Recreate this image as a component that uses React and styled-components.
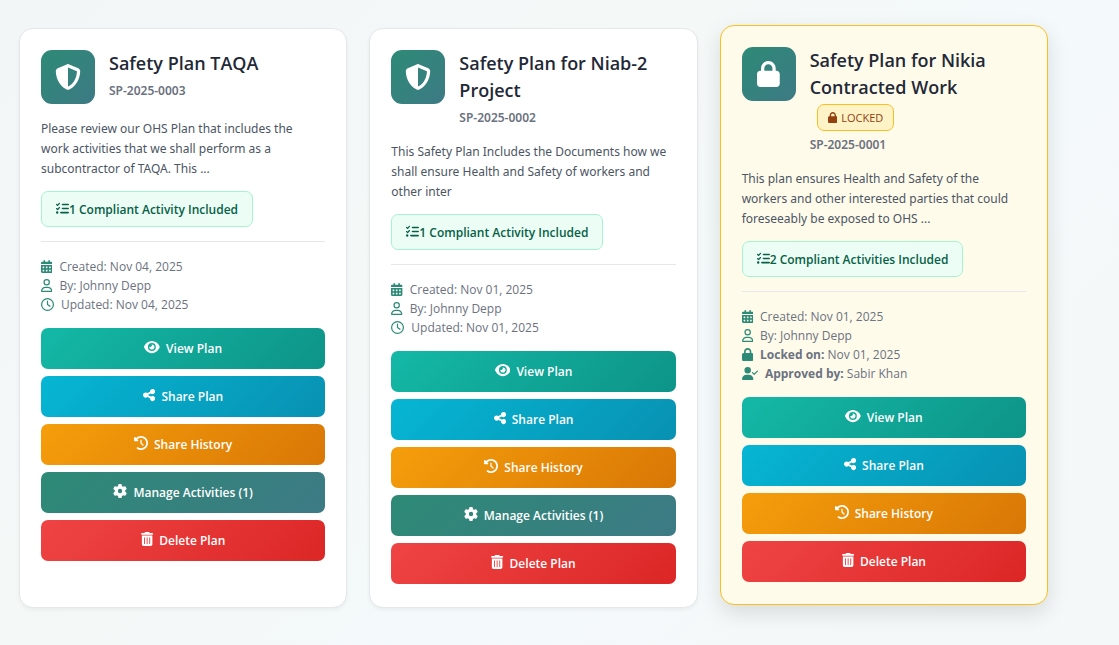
import React from "react";
import styled, { createGlobalStyle, css } from "styled-components";
import {
  FaShieldHalved, FaLock, FaListCheck, FaCalendarDays, FaRegUser, FaRegClock,
  FaUserCheck, FaEye, FaShareNodes, FaClockRotateLeft, FaGear, FaTrashCan,
} from "react-icons/fa6";

const GlobalStyle = createGlobalStyle`
  *, *::before, *::after { box-sizing: border-box; }
  body {
    margin: 0;
    min-height: 100vh;
    font-family: "Open Sans", "Noto Sans", sans-serif;
    color: #1f2937;
    background: linear-gradient(135deg, #f2f6f7 0%, #f4f8f7 40%, #f4f9fb 60%, #f5f8f8 100%);
  }
  p, h2, ul { margin: 0; padding: 0; }

  /* Font Awesome glyphs keep the proportions of their own view box. */
  svg { flex: none; width: auto; }
  svg[viewBox="0 0 448 512"] { aspect-ratio: 448 / 512; }
  svg[viewBox="0 0 512 512"] { aspect-ratio: 1; }
  svg[viewBox="0 0 576 512"] { aspect-ratio: 576 / 512; }
  svg[viewBox="0 0 640 512"] { aspect-ratio: 640 / 512; }
`;

const Page = styled.main`
  display: grid;
  grid-template-columns: repeat(3, minmax(0, 1fr));
  gap: 22px;
  padding: 28px 71px 37px 19px;
`;

const Card = styled.article`
  padding: 21px 21px 22px;
  border: 1px solid #e5e7eb;
  border-radius: 14px;
  background: #fff;
  box-shadow: 0 2px 4px rgba(0, 0, 0, 0.05);
  ${({ $locked }) => $locked && css`
    border-color: #fbbf24;
    background: #fffbeb;
    box-shadow: 0 8px 22px rgba(0, 0, 0, 0.12);
    transform: translateY(-3px);
  `}
`;

const Header = styled.header`
  display: flex;
  align-items: flex-start;
  gap: 14px;
  margin-bottom: 15px;
`;

const IconTile = styled.div`
  display: flex;
  flex: none;
  align-items: center;
  justify-content: center;
  width: 54px;
  height: 54px;
  border-radius: 11px;
  color: #fff;
  background: linear-gradient(135deg, #2d8a76, #3d7a85);
  svg { height: 26px; }
`;

const Heading = styled.div`
  flex: 1;
  min-width: 0;
`;

const Title = styled.h2`
  font-size: 18px;
  font-weight: 600;
  line-height: 27px;
`;

const LockedTag = styled.span`
  display: flex;
  align-items: center;
  gap: 4px;
  width: max-content;
  height: 27px;
  margin: 3px 0 0 7px;
  padding: 0 10px;
  border: 1px solid #fbbf24;
  border-radius: 7px;
  font-size: 11px;
  font-weight: 500;
  color: #92400e;
  background: #fef3c7;
  svg { height: 11px; }
`;

const Code = styled.p`
  margin-top: 5px;
  font-family: "Noto Sans", sans-serif;
  font-size: 12px;
  font-weight: 600;
  line-height: 18px;
  color: #6b7280;
`;

const Description = styled.p`
  padding-right: 4px;
  font-family: "Noto Sans", sans-serif;
  font-size: 12px;
  line-height: 20px;
  color: #4b5563;
`;

const Compliance = styled.div`
  display: flex;
  align-items: center;
  width: max-content;
  height: 36px;
  margin: 12px 0 14px;
  padding: 0 14px;
  border: 1px solid #a7f3d0;
  border-radius: 7px;
  font-size: 12px;
  font-weight: 600;
  color: #065f46;
  background: #ecfdf5;
  svg { height: 13px; margin-bottom: 2px; }
`;

const Meta = styled.ul`
  padding-top: 15px;
  border-top: 1px solid #e5e7eb;
  list-style: none;
`;

const MetaRow = styled.li`
  display: flex;
  align-items: center;
  gap: 7px;
  font-size: 12px;
  line-height: 19px;
  color: #6b7280;
  svg { height: 13px; color: #2d8a76; }
`;

const Actions = styled.div`
  display: flex;
  flex-direction: column;
  gap: 7px;
  margin-top: 14px;
`;

const ActionButton = styled.button`
  display: flex;
  align-items: center;
  justify-content: center;
  gap: 6px;
  height: 41px;
  padding: 0 14px;
  border: 0;
  border-radius: 7px;
  font-family: inherit;
  font-size: 12px;
  font-weight: 600;
  color: #fff;
  cursor: pointer;
  background: linear-gradient(135deg, ${({ $from }) => $from}, ${({ $to }) => $to});
  svg { height: 14px; margin-bottom: 3px; }
`;

const actionKinds = {
  view: { Icon: FaEye, label: "View Plan", from: "#14b8a6", to: "#0d9488" },
  share: { Icon: FaShareNodes, label: "Share Plan", from: "#06b6d4", to: "#0891b2" },
  history: { Icon: FaClockRotateLeft, label: "Share History", from: "#f59e0b", to: "#d97706" },
  manage: { Icon: FaGear, label: "Manage Activities (1)", from: "#2d8a76", to: "#3d7a85" },
  remove: { Icon: FaTrashCan, label: "Delete Plan", from: "#ef4444", to: "#dc2626" },
};

const plans = [
  {
    title: "Safety Plan TAQA",
    code: "SP-2025-0003",
    description: "Please review our OHS Plan that includes the work activities that we shall perform as a subcontractor of TAQA. This ...",
    compliance: "1 Compliant Activity Included",
    meta: [
      { Icon: FaCalendarDays, text: "Created: Nov 04, 2025" },
      { Icon: FaRegUser, text: "By: Johnny Depp" },
      { Icon: FaRegClock, text: "Updated: Nov 04, 2025" },
    ],
    actions: ["view", "share", "history", "manage", "remove"],
  },
  {
    title: "Safety Plan for Niab-2 Project",
    code: "SP-2025-0002",
    description: "This Safety Plan Includes the Documents how we shall ensure Health and Safety of workers and other inter",
    compliance: "1 Compliant Activity Included",
    meta: [
      { Icon: FaCalendarDays, text: "Created: Nov 01, 2025" },
      { Icon: FaRegUser, text: "By: Johnny Depp" },
      { Icon: FaRegClock, text: "Updated: Nov 01, 2025" },
    ],
    actions: ["view", "share", "history", "manage", "remove"],
  },
  {
    title: "Safety Plan for Nikia Contracted Work",
    code: "SP-2025-0001",
    locked: true,
    description: "This plan ensures Health and Safety of the workers and other interested parties that could foreseeably be exposed to OHS ...",
    compliance: "2 Compliant Activities Included",
    meta: [
      { Icon: FaCalendarDays, text: "Created: Nov 01, 2025" },
      { Icon: FaRegUser, text: "By: Johnny Depp" },
      { Icon: FaLock, label: "Locked on:", text: "Nov 01, 2025" },
      { Icon: FaUserCheck, label: "Approved by:", text: "Sabir Khan" },
    ],
    actions: ["view", "share", "history", "remove"],
  },
];

function PlanCard({ plan }) {
  return (
    <Card $locked={plan.locked}>
      <Header>
        <IconTile>{plan.locked ? <FaLock /> : <FaShieldHalved />}</IconTile>
        <Heading>
          <Title>{plan.title}</Title>
          {plan.locked && <LockedTag><FaLock />LOCKED</LockedTag>}
          <Code>{plan.code}</Code>
        </Heading>
      </Header>
      <Description>{plan.description}</Description>
      <Compliance><FaListCheck />{plan.compliance}</Compliance>
      <Meta>
        {plan.meta.map(({ Icon, label, text }) => (
          <MetaRow key={label || text}>
            <Icon />
            <span>{label && <strong>{label} </strong>}{text}</span>
          </MetaRow>
        ))}
      </Meta>
      <Actions>
        {plan.actions.map((kind) => {
          const { Icon, label, from, to } = actionKinds[kind];
          return (
            <ActionButton key={kind} type="button" $from={from} $to={to}>
              <Icon />{label}
            </ActionButton>
          );
        })}
      </Actions>
    </Card>
  );
}

export default function App() {
  return (
    <>
      <GlobalStyle />
      <Page>
        {plans.map((plan) => <PlanCard key={plan.code} plan={plan} />)}
      </Page>
    </>
  );
}
